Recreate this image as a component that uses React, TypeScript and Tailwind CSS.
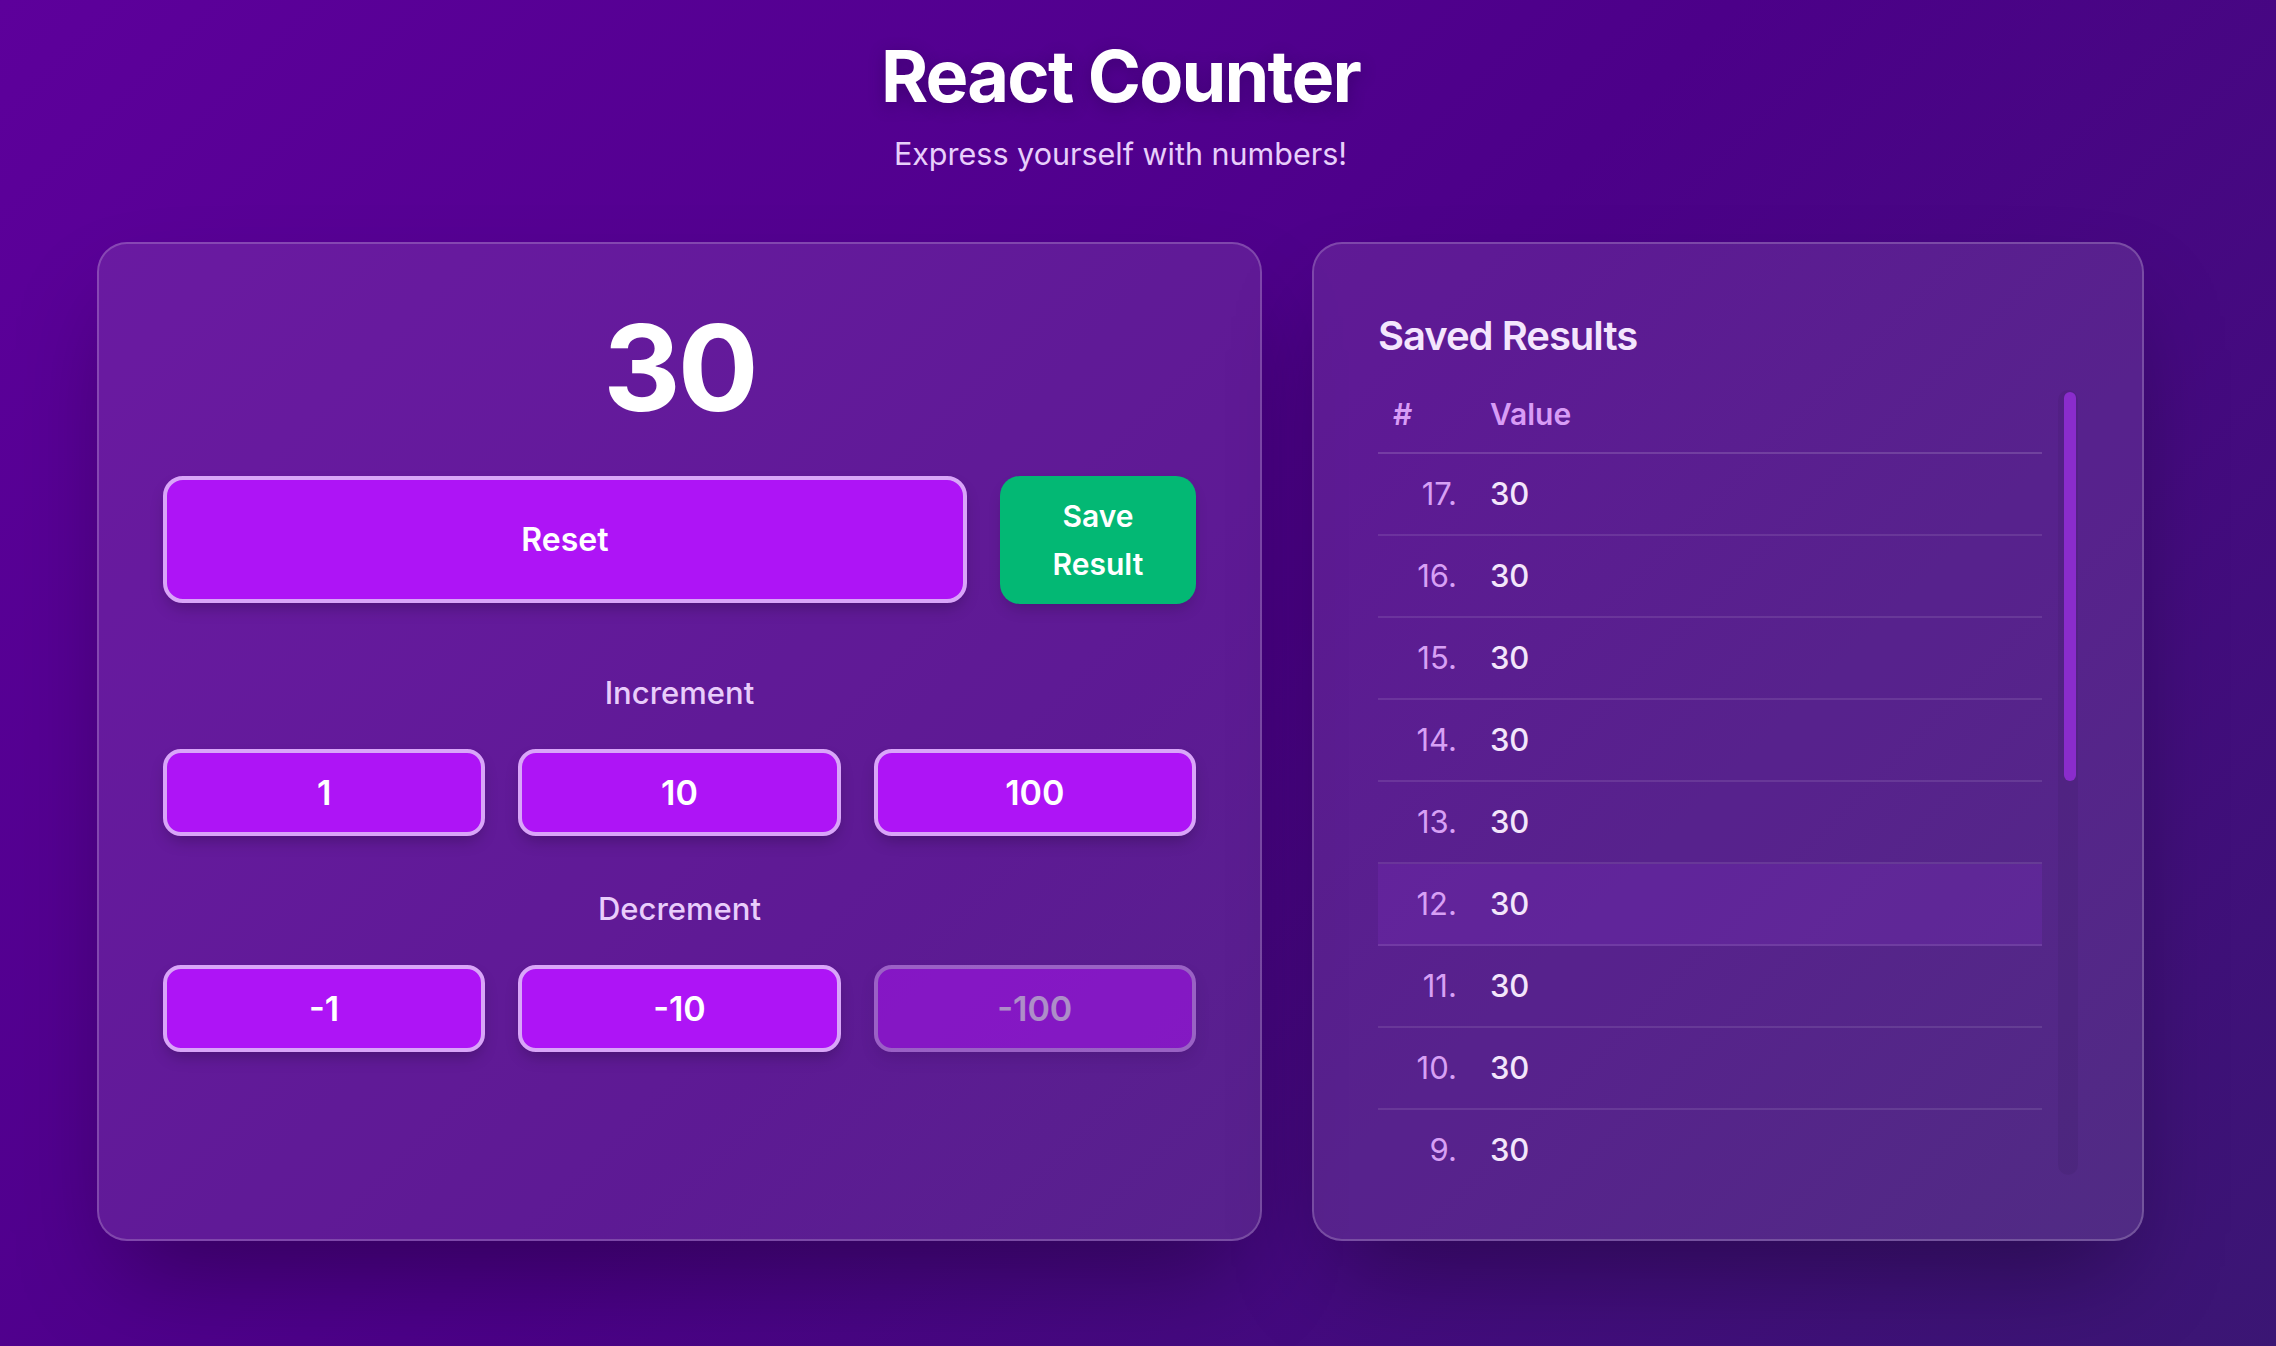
import React from "react";

const rows = [17, 16, 15, 14, 13, 12, 11, 10, 9, 8, 7, 6, 5, 4, 3, 2, 1];

function StepButton({ label, disabled }: { label: string; disabled?: boolean }) {
  return (
    <button
      disabled={disabled}
      className={
        "h-[87px] rounded-[18px] border-4 border-[#d9a5f9] bg-[#ae14f6] text-[34px] font-semibold text-white shadow-[0_8px_16px_-4px_rgba(0,0,0,0.25)] " +
        (disabled ? "opacity-50 cursor-not-allowed" : "")
      }
    >
      {label}
    </button>
  );
}

export default function App() {
  return (
    <div
      className="min-h-screen w-full bg-[linear-gradient(135deg,#5d009b_0%,#4c0089_48%,#3b1674_100%)] text-white"
      style={{ fontFamily: "Inter, 'Noto Sans', sans-serif" }}
    >
      <div className="w-[2241px] px-[97px] pt-[40px] pb-[80px]">
        <h1 className="text-center text-[72px] font-bold leading-none tracking-tight text-white [text-shadow:0_4px_16px_rgba(40,0,80,0.45)]">
          React Counter
        </h1>
        <p className="mt-[18px] text-center text-[30.5px] leading-[48px] text-[#e8cffb]">
          Express yourself with numbers!
        </p>

        <div className="mt-[64px] grid grid-cols-[7fr_5fr] gap-[50px]">
          {/* Counter panel */}
          <div className="rounded-[30px] border-2 border-white/20 bg-white/10 px-[64px] pt-[64px] pb-[64px] shadow-[0_50px_100px_-24px_rgba(0,0,0,0.35)]">
            <div className="text-center text-[120px] font-bold leading-none tracking-tight text-white">
              30
            </div>

            <div className="mt-[48px] flex gap-[33px]">
              <button className="h-[127px] flex-1 rounded-[20px] border-4 border-[#d9a5f9] bg-[#ae14f6] text-[32px] font-semibold text-white shadow-[0_8px_16px_-4px_rgba(0,0,0,0.25)]">
                Reset
              </button>
              <button className="h-[128px] w-[196px] rounded-[20px] bg-[#03b874] text-[30px] font-semibold leading-[48px] text-white shadow-[0_8px_16px_-4px_rgba(0,0,0,0.2)]">
                Save
                <br />
                Result
              </button>
            </div>

            <div className="mt-[65px] text-center text-[31px] font-medium leading-[48px] text-[#e9cdfb]">
              Increment
            </div>
            <div className="mt-[32px] grid grid-cols-3 gap-[33px]">
              <StepButton label="1" />
              <StepButton label="10" />
              <StepButton label="100" />
            </div>

            <div className="mt-[49px] text-center text-[31px] font-medium leading-[48px] text-[#e9cdfb]">
              Decrement
            </div>
            <div className="mt-[32px] grid grid-cols-3 gap-[33px]">
              <StepButton label="-1" />
              <StepButton label="-10" />
              <StepButton label="-100" disabled />
            </div>
          </div>

          {/* Saved results panel */}
          <div className="rounded-[30px] border-2 border-white/20 bg-white/10 px-[64px] pt-[64px] pb-[64px] shadow-[0_50px_100px_-24px_rgba(0,0,0,0.35)]">
            <h2 className="text-[40px] font-semibold leading-[56px] tracking-tight text-[#f4e6fd]">
              Saved Results
            </h2>
            <div className="mt-[26px] flex h-[785px]">
              <div className="min-w-0 flex-1 overflow-hidden pr-[16px]">
                <div className="flex h-[64px] items-start border-b-2 border-white/15 text-[30px] font-semibold leading-[48px] text-[#d89cf6]">
                  <div className="w-[96px] pl-[15px]">#</div>
                  <div className="pl-[16px]">Value</div>
                </div>
                {rows.map((n) => (
                  <div
                    key={n}
                    className={
                      "flex h-[82px] items-center border-b-2 border-white/10 text-[31px] leading-[48px] " +
                      (n === 12 ? "bg-[rgba(130,50,200,0.22)]" : "")
                    }
                  >
                    <div className="w-[96px] pr-[17px] text-right text-[#d7a0f5]">{n}.</div>
                    <div className="pl-[16px] font-medium text-[#f3e6fb]">30</div>
                  </div>
                ))}
              </div>
              <div className="w-[20px] rounded-full bg-black/5 pt-[2px] pl-[6px] pr-[2px]">
                <div className="h-[389px] w-[12px] rounded-full bg-[#8a2ccc]" />
              </div>
            </div>
          </div>
        </div>
      </div>
    </div>
  );
}
